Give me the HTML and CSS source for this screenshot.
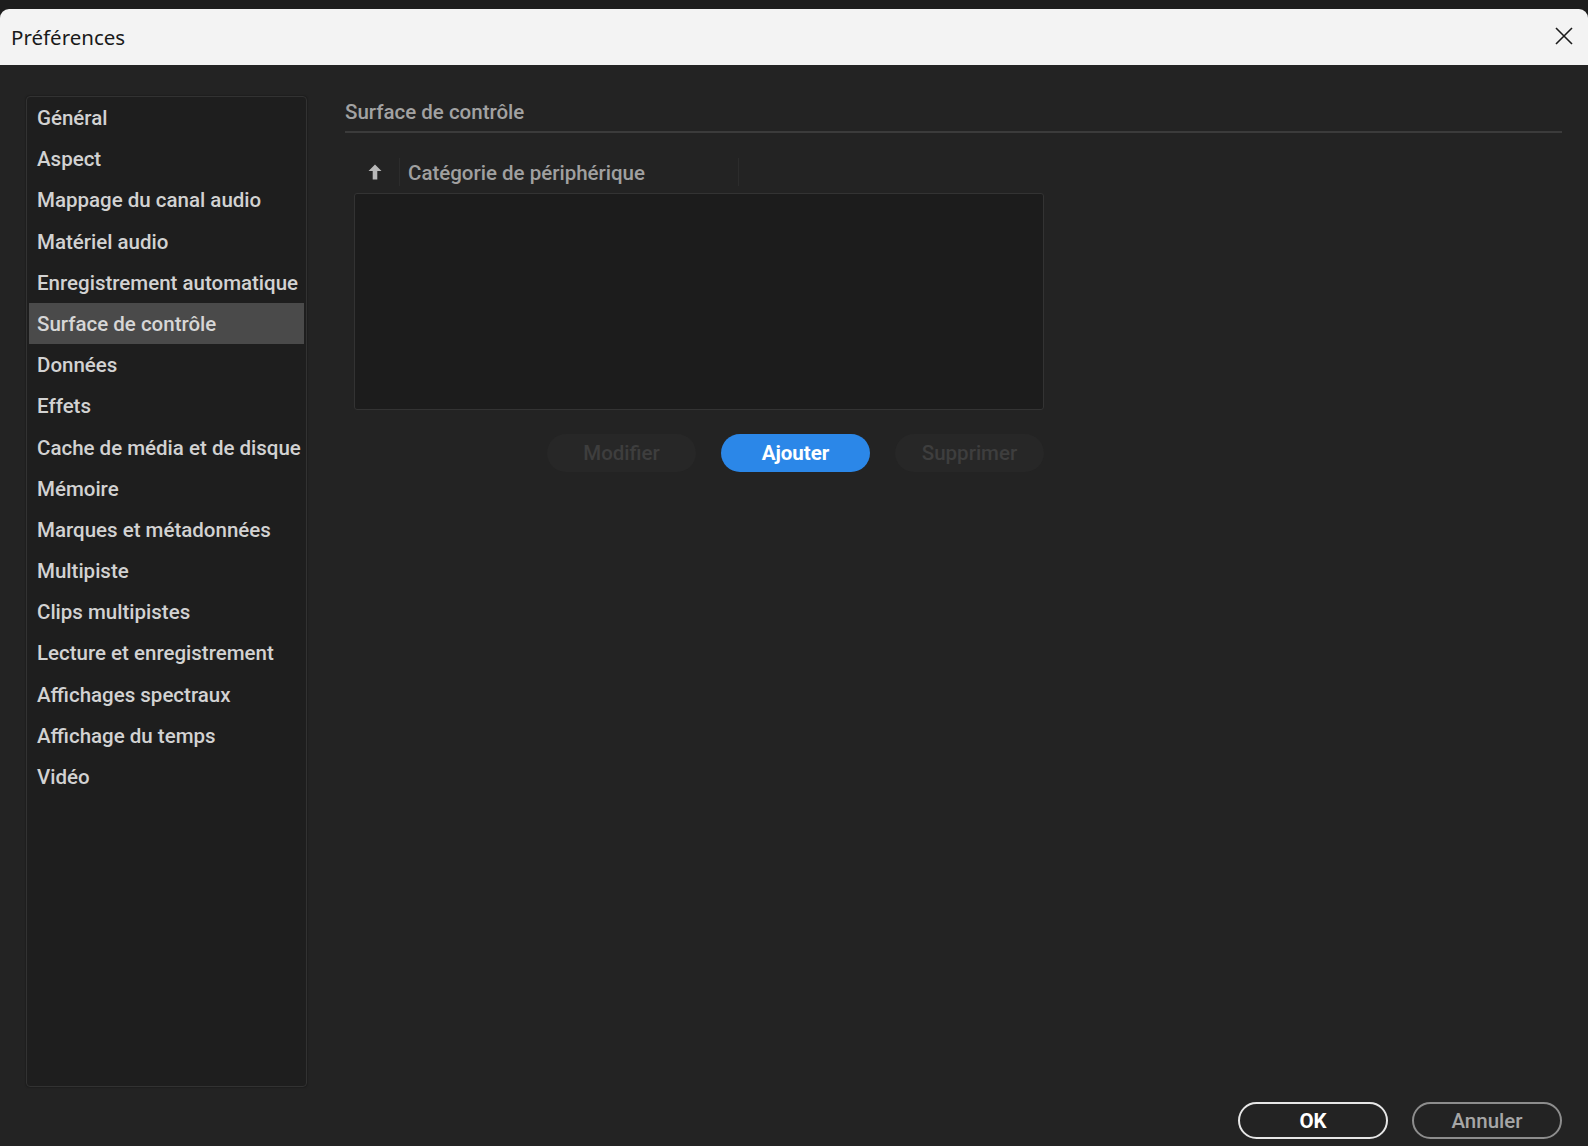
FILE: index.html
```html
<!DOCTYPE html>
<html lang="fr">
<head>
    <meta charset="UTF-8">
    <meta name="viewport" content="width=device-width, initial-scale=1.0">
    <title>Préférences</title>
    <link rel="stylesheet" href="styles.css">
</head>
<body>
    <div class="window">
        <div class="titlebar">
            <span class="title">Préférences</span>
            <button class="close" title="Fermer">
                <svg width="20" height="20" viewBox="0 0 20 20">
                    <path d="M2 2 L18 18 M18 2 L2 18" stroke="#1b1b1b" stroke-width="1.6" fill="none"/>
                </svg>
            </button>
        </div>

        <div class="content">
            <div class="panes">
                <ul class="categories">
                    <li>Général</li>
                    <li>Aspect</li>
                    <li>Mappage du canal audio</li>
                    <li>Matériel audio</li>
                    <li>Enregistrement automatique</li>
                    <li class="selected">Surface de contrôle</li>
                    <li>Données</li>
                    <li>Effets</li>
                    <li>Cache de média et de disque</li>
                    <li>Mémoire</li>
                    <li>Marques et métadonnées</li>
                    <li>Multipiste</li>
                    <li>Clips multipistes</li>
                    <li>Lecture et enregistrement</li>
                    <li>Affichages spectraux</li>
                    <li>Affichage du temps</li>
                    <li>Vidéo</li>
                </ul>

                <div class="page">
                    <h2 class="page-title">Surface de contrôle</h2>

                    <div class="device-table">
                        <div class="table-head">
                            <div class="sort-col">
                                <!-- flèche de tri croissant -->
                                <svg width="14" height="16" viewBox="0 0 14 16">
                                    <path d="M7 0.5 L13.5 7 L9.3 7 L9.3 15.5 L4.7 15.5 L4.7 7 L0.5 7 Z" fill="#b8b8b8"/>
                                </svg>
                            </div>
                            <div class="name-col">Catégorie de périphérique</div>
                        </div>
                        <div class="table-body"></div>

                        <div class="table-actions">
                            <button class="pill" disabled>Modifier</button>
                            <button class="pill primary">Ajouter</button>
                            <button class="pill" disabled>Supprimer</button>
                        </div>
                    </div>
                </div>
            </div>

            <div class="dialog-buttons">
                <button class="outline ok">OK</button>
                <button class="outline">Annuler</button>
            </div>
        </div>
    </div>
</body>
</html>
```

FILE: styles.css
```css
body {
    margin: 0;
    padding: 0;
    background: #1d1d1d;
    font-family: Roboto, "Open Sans", sans-serif;
    overflow: hidden;
}
.window {
    margin-top: 9px;
    height: 1137px;
    border-radius: 9px 9px 0 0;
    overflow: hidden;
    display: flex;
    flex-direction: column;
}
.titlebar {
    height: 56px;
    flex-shrink: 0;
    background: #f3f3f3;
    display: flex;
    align-items: center;
    justify-content: space-between;
    padding: 0 14px 0 11px;
}
.title {
    font-family: "Noto Sans", "Open Sans", sans-serif;
    font-size: 20.5px;
    color: #1a1a1a;
    margin-top: -1px;
}
.close {
    border: none;
    background: none;
    padding: 0;
    width: 20px;
    height: 20px;
    margin-top: -2px;
}
.content {
    flex: 1;
    background: #232323;
    display: flex;
    flex-direction: column;
    padding: 31px 26px 0 26px;
}
.panes {
    display: flex;
    gap: 38px;
}

/* liste des catégories à gauche */
.categories {
    list-style: none;
    margin: 0;
    padding: 0 2px;
    width: 275px;
    height: 989px;
    background: #1e1e1e;
    border: 1px solid #323232;
    border-radius: 4px;
    box-shadow: 0 0 2px rgba(0, 0, 0, 0.5);
}
.categories li {
    height: 41.2px;
    line-height: 43px;
    padding-left: 8px;
    font-size: 20.5px;
    font-weight: 500;
    color: #d2d2d2;
    white-space: nowrap;
}
.categories li.selected {
    background: #4a4a4a;
    color: #d6d6d6;
}

.page {
    flex: 1;
}
.page-title {
    margin: 0;
    height: 35px;
    line-height: 33px;
    font-size: 20.5px;
    font-weight: 500;
    color: #a2a2a2;
    border-bottom: 2px solid #3b3b3b;
}

.device-table {
    margin: 21px 0 0 9px;
    width: 690px;
}
.table-head {
    height: 36px;
    display: flex;
    align-items: center;
}
.sort-col {
    width: 46px;
    height: 28px;
    display: flex;
    align-items: center;
    justify-content: center;
    padding-right: 3px;
    box-sizing: border-box;
    border-right: 1px solid #2c2c2c;
}
.name-col {
    width: 330px;
    height: 28px;
    line-height: 30px;
    padding-left: 8px;
    font-size: 20.5px;
    font-weight: 500;
    color: #a0a0a0;
    border-right: 1px solid #2c2c2c;
}
.table-body {
    margin-top: 3px;
    height: 215px;
    background: #1c1c1c;
    border: 1px solid #333;
    border-radius: 3px;
}
.table-actions {
    display: flex;
    justify-content: flex-end;
    gap: 25px;
    margin-top: 24px;
}
.pill {
    width: 149px;
    height: 38px;
    border: none;
    border-radius: 19px;
    font-family: Roboto, sans-serif;
    font-size: 20.5px;
    font-weight: 500;
    background: #272727;
    color: #3e3e3e;
}
.pill.primary {
    background: #2b87e8;
    color: #fff;
    font-weight: bold;
}

.dialog-buttons {
    display: flex;
    justify-content: flex-end;
    gap: 24px;
    margin-top: 15px;
}
.outline {
    width: 150px;
    height: 37px;
    border: 2px solid #8d8d8d;
    border-radius: 19px;
    background: transparent;
    font-family: Roboto, sans-serif;
    font-size: 20.5px;
    font-weight: 500;
    color: #a6a6a6;
}
.outline.ok {
    border-color: #e6e6e6;
    color: #fff;
    font-weight: bold;
}
```
